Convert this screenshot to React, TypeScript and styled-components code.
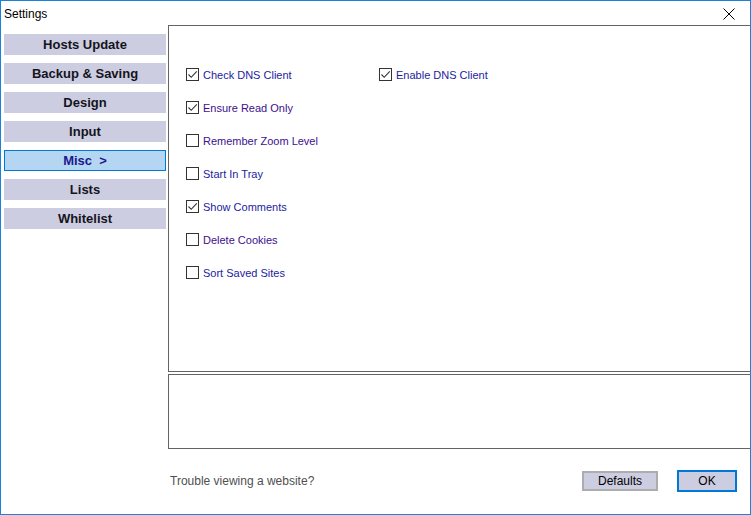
import React, { useState } from 'react';
import styled, { createGlobalStyle } from 'styled-components';

const GlobalStyle = createGlobalStyle`
    html, body {
        margin: 0;
        padding: 0;
        background: #ffffff;
    }
    body {
        font-family: "Liberation Sans", Arial, sans-serif;
    }
`;

const Window = styled.div`
    width: 751px;
    height: 515px;
    box-sizing: border-box;
    border: 1px solid #1883d7;
    background: #ffffff;
    display: flex;
    flex-direction: column;
    overflow: hidden;
`;

const TitleBar = styled.div`
    height: 24px;
    flex: none;
    display: flex;
    align-items: center;
    justify-content: space-between;
    padding-left: 3px;
    padding-right: 15px;
    padding-top: 1px;
    box-sizing: border-box;
    font-size: 12px;
    color: #000;
`;

const CloseIcon = styled.svg`
    width: 12px;
    height: 12px;
    display: block;
`;

const Body = styled.div`
    flex: 1;
    display: flex;
    min-height: 0;
`;

const NavSelection = styled.div`
    width: 162px;
    flex: none;
    margin-left: 3px;
    padding-top: 9px;
    display: flex;
    flex-direction: column;
    gap: 8px;
`;

const NavButton = styled.button<{ $active?: boolean }>`
    height: 21px;
    box-sizing: border-box;
    padding: 0;
    margin: 0;
    border: 1px solid ${p => (p.$active ? '#0078d7' : '#cdcde1')};
    background: ${p => (p.$active ? '#b4d6f2' : '#cdcde1')};
    color: ${p => (p.$active ? '#1a1a8c' : '#141420')};
    font-family: "Liberation Sans", Arial, sans-serif;
    font-weight: bold;
    font-size: 13px;
    white-space: pre;
    cursor: pointer;
    outline: 0;
`;

const ScreenContent = styled.div`
    flex: 1;
    display: flex;
    flex-direction: column;
    margin-left: 2px;
    margin-right: -10px;
`;

const OptionsPanel = styled.div`
    height: 347px;
    flex: none;
    box-sizing: border-box;
    border: 1px solid #646464;
    padding: 32px 0 0 17px;
    display: grid;
    grid-template-columns: 193px auto;
    grid-auto-rows: 33px;
    align-content: start;
`;

const InfoPanel = styled.div`
    height: 75px;
    flex: none;
    box-sizing: border-box;
    margin-top: 2px;
    border: 1px solid #646464;
`;

const CheckRow = styled.label<{ $tone?: 'blue' | 'purple' }>`
    display: flex;
    align-items: center;
    gap: 4px;
    font-size: 11px;
    color: ${p => (p.$tone === 'purple' ? '#3c1090' : '#1c1ca0')};
    cursor: pointer;
`;

const Box = styled.span`
    width: 13px;
    height: 13px;
    box-sizing: border-box;
    border: 1px solid #333333;
    background: #ffffff;
    display: flex;
    align-items: center;
    justify-content: center;
`;

const Footer = styled.div`
    flex: 1;
    display: flex;
    align-items: center;
    padding-left: 2px;
    padding-right: 23px;
    padding-bottom: 2px;
`;

const HelpText = styled.span`
    font-size: 12px;
    color: #505050;
    flex: 1;
`;

const DialogButton = styled.button<{ $primary?: boolean }>`
    height: ${p => (p.$primary ? '22px' : '20px')};
    width: ${p => (p.$primary ? '60px' : '76px')};
    box-sizing: border-box;
    margin-left: ${p => (p.$primary ? '19px' : '0')};
    padding: 0;
    border: ${p => (p.$primary ? '2px solid #0078d7' : '2px solid #adadad')};
    background: #cdcde1;
    color: #000;
    font-family: "Liberation Sans", Arial, sans-serif;
    font-size: 12px;
    outline: 0;
`;

type Option = { label: string; checked: boolean; tone?: 'blue' | 'purple'; col: number; row: number };

const initialOptions: Option[] = [
    { label: 'Check DNS Client', checked: true, col: 1, row: 1 },
    { label: 'Enable DNS Client', checked: true, col: 2, row: 1 },
    { label: 'Ensure Read Only', checked: true, tone: 'purple', col: 1, row: 2 },
    { label: 'Remember Zoom Level', checked: false, tone: 'purple', col: 1, row: 3 },
    { label: 'Start In Tray', checked: false, col: 1, row: 4 },
    { label: 'Show Comments', checked: true, col: 1, row: 5 },
    { label: 'Delete Cookies', checked: false, tone: 'purple', col: 1, row: 6 },
    { label: 'Sort Saved Sites', checked: false, col: 1, row: 7 },
];

const menuItems = ['Hosts Update', 'Backup & Saving', 'Design', 'Input', 'Misc', 'Lists', 'Whitelist'];

const Check = () => (
    <svg width="11" height="11" viewBox="0 0 11 11">
        <polyline points="1.5,5.5 4.2,8.3 9.8,2.3" fill="none" stroke="#333" strokeWidth="1.1" />
    </svg>
);

const App = () => {
    const [selected, setSelected] = useState('Misc');
    const [options, setOptions] = useState(initialOptions);

    const toggle = (i: number) =>
        setOptions(opts => opts.map((o, j) => (j === i ? { ...o, checked: !o.checked } : o)));

    return (
        <>
            <GlobalStyle />
            <Window>
                <TitleBar>
                    <span>Settings</span>
                    <CloseIcon viewBox="0 0 12 12">
                        <path d="M0.5 0.5 L11.5 11.5 M11.5 0.5 L0.5 11.5" stroke="#000" strokeWidth="1" />
                    </CloseIcon>
                </TitleBar>
                <Body>
                    <NavSelection>
                        {menuItems.map(item => (
                            <NavButton key={item} $active={item === selected} onClick={() => setSelected(item)}>
                                {item === selected ? `${item}  >` : item}
                            </NavButton>
                        ))}
                    </NavSelection>
                    <ScreenContent>
                        <OptionsPanel>
                            {options.map((o, i) => (
                                <CheckRow
                                    key={o.label}
                                    $tone={o.tone}
                                    style={{ gridColumn: o.col, gridRow: o.row }}
                                    onClick={() => toggle(i)}
                                >
                                    <Box>{o.checked && <Check />}</Box>
                                    {o.label}
                                </CheckRow>
                            ))}
                        </OptionsPanel>
                        <InfoPanel />
                        <Footer>
                            <HelpText>Trouble viewing a website?</HelpText>
                            <DialogButton>Defaults</DialogButton>
                            <DialogButton $primary>OK</DialogButton>
                        </Footer>
                    </ScreenContent>
                </Body>
            </Window>
        </>
    );
};

export default App;
